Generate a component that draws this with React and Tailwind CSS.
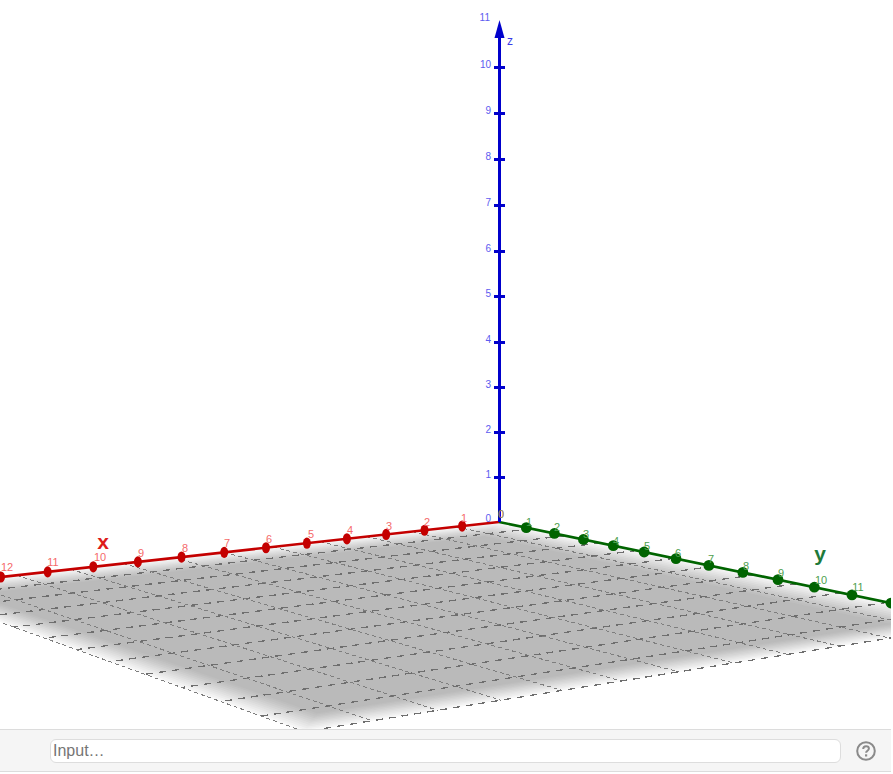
import React from 'react'

// plane coords -> screen, fitted from the tick positions
const project = (x, y) => {
    const w = 1 - 0.01006 * x - 0.01473 * y
    return [(499 - 41.51 * x + 19.54 * y) / w, (522 - 1.22 * x - 2.13 * y) / w]
}
const pt = (x, y) => project(x, y).map((n) => n.toFixed(1)).join(',')

const X_MAX = 14
const Y_MAX = 14.3
const CELLS = 12
const range = (from, to) => Array.from({ length: to - from + 1 }, (_, i) => from + i)

// stepped fade from the plane edge inwards
const FADE = ['#f8f8f8', '#f2f2f2', '#ececec', '#e6e6e6', '#e0e0e0', '#dadada', '#d4d4d4', '#cecece', '#c8c8c8', '#c3c3c3', '#bebebe', '#bababa']

const zTicks = [[1, 477], [2, 432], [3, 387], [4, 342], [5, 296], [6, 251], [7, 205], [8, 159], [9, 113], [10, 67]]
const xLabels = [[1, 464, 522], [2, 427, 526], [3, 389, 530], [4, 350, 534], [5, 311, 538], [6, 269, 543], [7, 227, 547], [8, 185, 552], [9, 141, 557], [10, 100, 561], [11, 53, 566], [12, 7, 571]]
const yLabels = [[1, 529, 526], [2, 557, 531], [3, 586, 538], [4, 616, 545], [5, 647, 550], [6, 678, 557], [7, 711, 563], [8, 746, 570], [9, 781, 577], [10, 821, 584], [11, 858, 591]]

const Plot = () => (
    <svg width="891" height="729" viewBox="0 0 891 729" className="block" fontFamily="'Liberation Sans', Arial, sans-serif">
        {FADE.map((color, i) => {
            const a = i * 0.13
            const bx = X_MAX - i * 0.07
            const by = Y_MAX - i * 0.08
            return <polygon key={color} points={`${pt(a, a)} ${pt(bx, a)} ${pt(bx, by)} ${pt(a, by)}`} fill={color} />
        })}

        <g stroke="#6e6e6e" fill="none" shapeRendering="crispEdges">
            {range(0, CELLS).map((n) => (
                <g key={n}>
                    {/* lines along y are finer than lines along x */}
                    <polyline points={`${pt((n * X_MAX) / CELLS, 0)} ${pt((n * X_MAX) / CELLS, Y_MAX)}`} strokeDasharray="4 3" stroke="#7e7e7e" />
                    <polyline points={`${pt(0, (n * Y_MAX) / CELLS)} ${pt(X_MAX, (n * Y_MAX) / CELLS)}`} strokeDasharray="7 6" strokeWidth="1.3" />
                </g>
            ))}
        </g>

        <polyline points={`${pt(0, 0)} ${pt(12.1, 0)}`} stroke="#c40000" strokeWidth="2.6" />
        {range(1, 12).map((n) => {
            const [cx, cy] = project(n, 0)
            return <ellipse key={n} cx={cx} cy={cy} rx="4" ry="5.6" fill="#c40000" />
        })}

        <polyline points={`${pt(0, 0)} ${pt(0, 12.1)}`} stroke="#006400" strokeWidth="2.6" />
        {range(1, 12).map((n) => {
            const [cx, cy] = project(0, n)
            return <circle key={n} cx={cx} cy={cy} r="5.4" fill="#006400" />
        })}

        <rect x="498" y="30" width="3" height="492" fill="#0000cc" />
        <polygon points="499.5,20 504.5,38 494.5,38" fill="#0000cc" />
        {zTicks.map(([n, y]) => (
            <rect key={n} x="494" y={y - 1} width="11" height="3" fill="#0000cc" />
        ))}

        <g fontSize="10" fill="#5c5cf0" textAnchor="end">
            {zTicks.map(([n, y]) => (
                <text key={n} x="491" y={y + 1}>{n}</text>
            ))}
            <text x="490" y="21">11</text>
            <text x="491" y="522">0</text>
        </g>
        <text x="507" y="45" fontSize="12" fill="#3a3ae8">z</text>

        <g fontSize="11" fill="#f56a6a" textAnchor="middle">
            {xLabels.map(([n, x, y]) => (
                <text key={n} x={x} y={y}>{n}</text>
            ))}
            <text x="501" y="518">0</text>
        </g>
        <g fontSize="11" fill="#4f9f4f" textAnchor="middle">
            {yLabels.map(([n, x, y]) => (
                <text key={n} x={x} y={y}>{n}</text>
            ))}
            <text x="501" y="518" fillOpacity="0.7">0</text>
        </g>

        <text x="103" y="549" fontSize="21" fontWeight="700" fill="#dd1c1c" textAnchor="middle">x</text>
        <text x="820" y="561" fontSize="21" fontWeight="700" fill="#1f7a3a" textAnchor="middle">y</text>
    </svg>
)

const App = () => {
    return (
        <div className="flex flex-col w-[891px] h-[774px] bg-white overflow-hidden font-['Liberation_Sans',Arial,sans-serif]">
            <div className="h-[729px] shrink-0 overflow-hidden">
                <Plot />
            </div>
            <div className="h-[43px] shrink-0 flex items-center gap-[15px] pl-[50px] pr-[15px] bg-[#f5f5f5] border-y border-[#dcdcdc]">
                <input
                    type="text"
                    placeholder="Input…"
                    className="flex-1 h-[24px] px-[2px] bg-white border border-[#dddddd] rounded-md text-base outline-none placeholder:text-[#757575]"
                />
                <svg width="20" height="20" viewBox="0 0 20 20" className="shrink-0">
                    <circle cx="10" cy="10" r="8.8" fill="none" stroke="#8a8a8a" strokeWidth="2" />
                    <path d="M7.2 8c0-1.8 1.2-2.8 2.9-2.8 1.6 0 2.8 1 2.8 2.4 0 2.2-2.8 2.1-2.8 4.2" fill="none" stroke="#8a8a8a" strokeWidth="2" />
                    <rect x="9" y="13.3" width="2.2" height="2.2" fill="#8a8a8a" />
                </svg>
            </div>
        </div>
    )
}

export default App
